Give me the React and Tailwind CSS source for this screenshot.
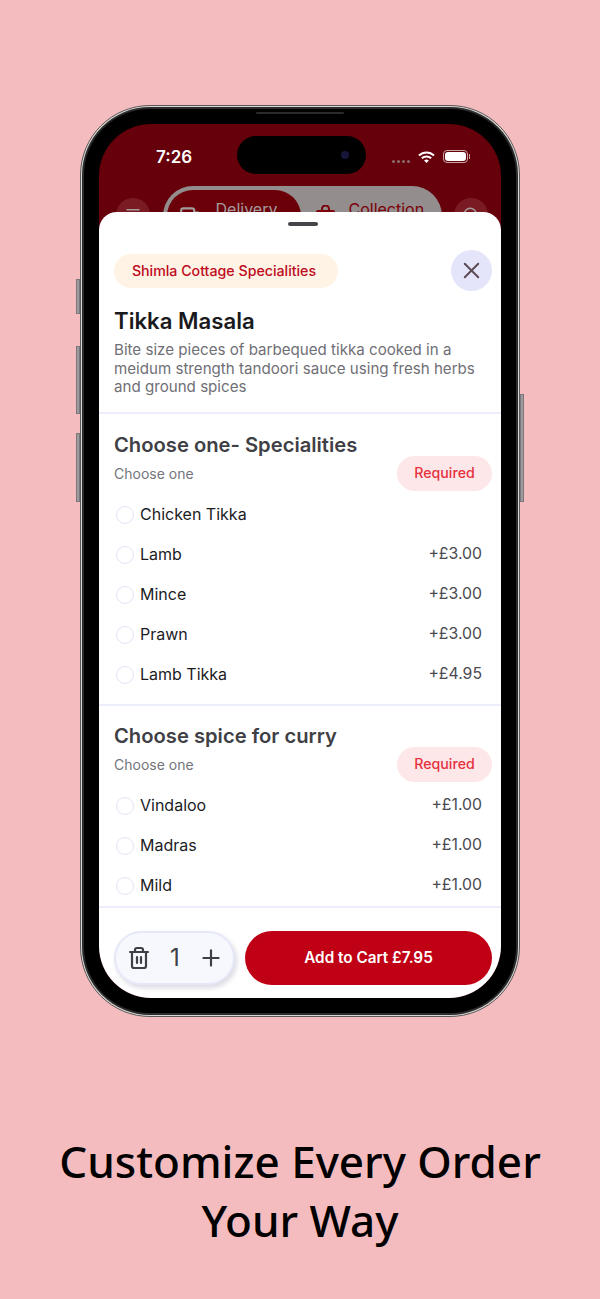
import { Trash2, Plus, X, Truck, Search, Menu } from 'lucide-react';

const FONT = "font-['Inter','Noto_Sans',sans-serif]";

function OptionRow({ name, price }) {
  return (
    <div className="flex items-center h-[40px] pl-[17px] pr-[19px]">
      <span className="w-[18px] h-[18px] rounded-full border border-[#e2e3f6] bg-white shrink-0" />
      <span className="ml-[6px] text-[16px] text-[#1c1c1f] flex-1 leading-[20px] -mt-[1px]">{name}</span>
      {price && <span className="text-[15.8px] text-[#4a4a50] leading-[20px] -mt-[1px]">{price}</span>}
    </div>
  );
}

function Group({ title, options, topPad }) {
  return (
    <div className="border-t-2 border-[#eceefb]">
      <div className={`px-[15px] ${topPad}`}>
        <h3 className="text-[20.2px] leading-[28px] font-semibold text-[#3f3f46]">{title}</h3>
        <div className="flex items-center justify-between -mt-[3px]">
          <span className="text-[14px] text-[#75757c]">Choose one</span>
          <span className="h-[35px] w-[95px] -mr-[6px] flex items-center justify-center rounded-full bg-[#fde7e8] text-[14.2px] font-medium text-[#e5323f]">Required</span>
        </div>
      </div>
      <div className="pt-[4px]">
        {options.map((o) => (
          <OptionRow key={o.name} name={o.name} price={o.price} />
        ))}
      </div>
    </div>
  );
}

function SideButton({ className }) {
  return <div className={`absolute w-[4px] bg-[#9c9a9c] border border-[#7a787a] ${className}`} />;
}

function WifiGlyph() {
  return (
    <svg width="17" height="12" viewBox="0 0 17 12" className="absolute left-[319px] top-[27px]">
      <path d="M1 4.5A10.6 10.6 0 0 1 16 4.5" fill="none" stroke="white" strokeWidth="2" />
      <path d="M3.83 7.33A6.6 6.6 0 0 1 13.17 7.33" fill="none" stroke="white" strokeWidth="2" />
      <path d="M8.5 12L6.1 9.6A3.4 3.4 0 0 1 10.9 9.6Z" fill="white" />
    </svg>
  );
}

function BagGlyph() {
  return (
    <svg width="19" height="20" viewBox="0 0 19 20" className="mt-[6px] shrink-0">
      <path d="M6 6V4a3.5 3.5 0 0 1 7 0V6" fill="none" stroke="#7c0009" strokeWidth="2" />
      <rect x="0" y="5" width="19" height="15" rx="2" fill="#7c0009" />
    </svg>
  );
}

export default function App() {
  return (
    <div className={`w-[600px] h-[1299px] bg-[#f5bcbf] overflow-hidden flex flex-col items-center pt-[105px] ${FONT}`}>
      {/* phone */}
      <div className="relative w-[440px] h-[912px] shrink-0 rounded-[70px] bg-[#d9d6d3] border border-[#5a5858] p-[1px]">
        <SideButton className="-left-[5px] top-[173px] h-[35px]" />
        <SideButton className="-left-[5px] top-[240px] h-[68px]" />
        <SideButton className="-left-[5px] top-[327px] h-[69px]" />
        <SideButton className="-right-[5px] top-[288px] h-[108px]" />

        <div className="w-full h-full rounded-[68px] bg-[#2b2b2b] p-[2px]">
          <div className="relative w-full h-full rounded-[66px] bg-black p-[15px]">
            <div className="absolute left-[172px] top-[3px] w-[88px] h-[2px] rounded-full bg-[#2b2b2b]" />
            <div className="relative w-full h-full rounded-[52px] overflow-hidden bg-[#66000a]">
              {/* status bar */}
              <div className="relative h-[62px] text-white">
                <span className="absolute left-[57px] top-[22px] text-[17px] leading-[22px] font-semibold">7:26</span>
                <div className="absolute left-[138px] top-[12px] w-[129px] h-[38px] rounded-full bg-black flex items-center justify-end pr-[17px]">
                  <span className="w-[8px] h-[8px] rounded-full bg-[#16163a]" />
                </div>
                <div className="absolute left-[293px] top-[36px] flex gap-[2px]">
                  <span className="w-[3px] h-[3px] rounded-full bg-[#8d6a6c]" />
                  <span className="w-[3px] h-[3px] rounded-full bg-[#8d6a6c]" />
                  <span className="w-[3px] h-[3px] rounded-full bg-[#8d6a6c]" />
                  <span className="w-[3px] h-[3px] rounded-full bg-[#8d6a6c]" />
                </div>
                <WifiGlyph />
                <div className="absolute left-[344px] top-[26px] w-[25px] h-[13px] rounded-[4px] border border-[#c9a6a8] p-[1px]">
                  <div className="w-full h-full rounded-[3px] bg-white" />
                </div>
                <div className="absolute left-[370px] top-[30px] w-[1px] h-[5px] bg-[#c9a6a8]" />
              </div>

              {/* header behind the sheet */}
              <div className="flex items-start justify-between pl-[17px] pr-[13px]">
                <div className="w-[34px] h-[34px] mt-[12px] rounded-full bg-[#7a1a22] flex items-center justify-center">
                  <Menu size={18} className="text-[#a39c9c]" />
                </div>
                <div className="flex w-[279px] h-[60px] p-[4px] rounded-[30px] bg-[#938d8d]">
                  <div className="w-[134px] rounded-[26px] bg-[#6c0009] flex items-start gap-[11px] pl-[12px] pt-[9px] text-[#a39c9c]">
                    <Truck size={26} className="mt-[5px] shrink-0" />
                    <span className="text-[16px] leading-[20px]">Delivery</span>
                  </div>
                  <div className="flex-1 flex items-start gap-[14px] pl-[15px] pt-[9px] text-[#7c0009]">
                    <BagGlyph />
                    <span className="text-[16px] leading-[20px]">Collection</span>
                  </div>
                </div>
                <div className="w-[34px] h-[34px] mt-[12px] rounded-full bg-[#7a1a22] flex items-center justify-center">
                  <Search size={18} className="text-[#a39c9c]" />
                </div>
              </div>

              {/* bottom sheet */}
              <div className="absolute left-0 right-0 top-[88px] bottom-0 bg-white rounded-t-[18px] flex flex-col">
                <div className="w-[30px] h-[4px] rounded-full bg-[#45454a] ml-[189px] mt-[10px]" />

                <div className="flex items-center justify-between pl-[15px] pr-[9px] mt-[24px]">
                  <span className="h-[34px] w-[224px] pr-[4px] flex items-center justify-center rounded-full bg-[#fef3e4] text-[14.2px] font-medium text-[#bd0a22]">Shimla Cottage Specialities</span>
                  <span className="w-[41px] h-[41px] rounded-full bg-[#e4e5fa] flex items-center justify-center">
                    <X size={27} strokeWidth={1.7} className="text-[#5c4a52]" />
                  </span>
                </div>

                <div className="px-[15px] mt-[14px]">
                  <h2 className="text-[22.2px] leading-[32px] font-semibold text-[#1a1a1d]">Tikka Masala</h2>
                  <p className="mt-[4px] text-[15.13px] leading-[18.5px] text-[#6f6f76]">
                    Bite size pieces of barbequed tikka cooked in a
                    <br />
                    meidum strength tandoori sauce using fresh herbs
                    <br />
                    and ground spices
                  </p>
                </div>

                <div className="mt-[15px]">
                  <Group
                    title="Choose one- Specialities"
                    topPad="pt-[17px]"
                    options={[
                      { name: 'Chicken Tikka' },
                      { name: 'Lamb', price: '+£3.00' },
                      { name: 'Mince', price: '+£3.00' },
                      { name: 'Prawn', price: '+£3.00' },
                      { name: 'Lamb Tikka', price: '+£4.95' },
                    ]}
                  />
                  <div className="mt-[9px]">
                    <Group
                      title="Choose spice for curry"
                      topPad="pt-[16px]"
                      options={[
                        { name: 'Vindaloo', price: '+£1.00' },
                        { name: 'Madras', price: '+£1.00' },
                        { name: 'Mild', price: '+£1.00' },
                      ]}
                    />
                  </div>
                </div>

                {/* footer */}
                <div className="border-t-2 border-[#eceefb] flex items-center gap-[10px] pl-[15px] pr-[9px] pt-[23px]">
                  <div className="w-[121px] h-[54px] shrink-0 rounded-full bg-[#f6f8fe] border-2 border-[#e6e8f8] shadow-[2px_3px_5px_rgba(70,70,110,0.2)] flex items-center pl-[11px] text-[#3f3f46]">
                    <Trash2 size={24} strokeWidth={2.2} className="shrink-0" />
                    <span className="ml-[19px] text-[24px] leading-none">1</span>
                    <Plus size={26} strokeWidth={2} className="ml-[18px] shrink-0" />
                  </div>
                  <button className="flex-1 h-[54px] pt-[2px] rounded-full bg-[#bf0015] text-white text-[15.3px] font-semibold">Add to Cart £7.95</button>
                </div>
              </div>
            </div>
          </div>
        </div>
      </div>

      <h1 className="mt-[115px] w-[520px] text-center text-[44px] leading-[59px] font-medium text-black font-['Noto_Sans',sans-serif]">
        Customize Every Order
        <br />
        Your Way
      </h1>
    </div>
  );
}
